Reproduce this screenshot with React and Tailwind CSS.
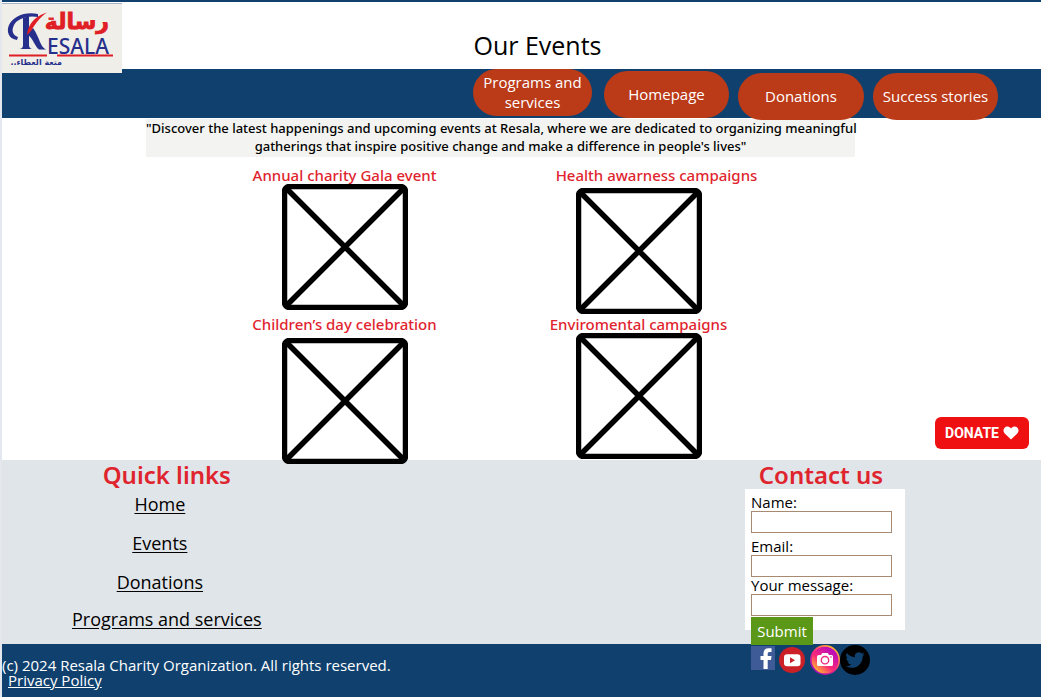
import React from "react";

const navItems = [
  { label: "Programs and services", cls: "mr-3 w-[119px]" },
  { label: "Homepage", cls: "mr-[9px] mt-0.5 w-[125px]" },
  { label: "Donations", cls: "mr-[9px] mt-1 w-[126px]" },
  { label: "Success stories", cls: "mt-1 w-[125px]" },
];

function Logo() {
  return (
    <svg viewBox="0 0 120 70" className="block h-[70px] w-[120px]" role="img" aria-label="Resala">
      <rect width="120" height="70" fill="#f0eee8" />
      <path d="M0 .5H120" stroke="#a9b0cc" strokeWidth="1" />
      <path d="M36 11C24 8 11 13 7 22C4 29 7 36 15 37L16 34C11 32 9 28 12 22C15 16 25 12 36 14Z" fill="#272f8c" />
      <path d="M21 15L27 13V42Q27 45 30 46H17Q21 46 21 42Z" fill="#272f8c" />
      <path d="M26 30L31 25C34 29 36 34 38 39C40 43 41 45 44 46.500H37C33 44 31 35 26 32Z" fill="#272f8c" />
      <path d="M25 32C26 21 33 13 45 9.500C38 14 34 20 29 28Z" fill="#e01e26" />
      <text x="107" y="26" textAnchor="end" fontFamily="DejaVu Sans, sans-serif" fontWeight="700" fontSize="22" fill="#e01e26" stroke="#e01e26" strokeWidth=".8">رسالة</text>
      <text x="45" y="51" fontFamily="Noto Sans, sans-serif" fontWeight="500" fontSize="21" fill="#272f8c">ESALA</text>
      <path d="M7 52.500H45M55 52.500H111" stroke="#e01e26" strokeWidth="2" />
      <text x="60" y="62" direction="rtl" fontFamily="DejaVu Sans, sans-serif" fontWeight="700" fontSize="8" fill="#272f8c">متعة العطاء..</text>
    </svg>
  );
}

function Placeholder() {
  return (
    <svg viewBox="0 0 126 126" className="relative block size-[126px] shrink-0" fill="none" stroke="#000" aria-hidden="true">
      <rect x="2.5" y="2.5" width="121" height="121" rx="5" strokeWidth="5.5" fill="#fff" />
      <path d="M4 4L122 122M122 4L4 122" strokeWidth="5.5" />
    </svg>
  );
}

function EventTitle({ children, className = "" }) {
  return (
    <h2 className={`whitespace-nowrap font-['Noto_Sans',sans-serif] text-[15px] leading-[14px] font-medium text-[#df242e] ${className}`}>{children}</h2>
  );
}

function Field({ id, label, type = "text", className = "" }) {
  return (
    <div className={className}>
      <label htmlFor={id} className="block pb-0.5 text-[15px] leading-[14px]">{label}</label>
      <input id={id} type={type} className="block h-[22px] w-[141px] border border-[#a88972] bg-white px-1 text-sm" />
    </div>
  );
}

function Socials() {
  return (
    <div className="flex items-center pl-1.5">
      <a href="#facebook" aria-label="Facebook" className="mr-1 -mt-1">
        <svg viewBox="0 0 24 24" className="block size-6">
          <rect width="24" height="24" fill="#3e5b98" />
          <path d="M12.500 23V14H9.500V10H12.500V7.500C12.500 4 14.500 2.300 17.500 2.300H20.500V6H18.500C17 6 16.700 6.700 16.700 8V10H20.500L20 14H16.700V23Z" fill="#fff" />
        </svg>
      </a>
      <a href="#youtube" aria-label="YouTube" className="mr-[5px]">
        <svg viewBox="0 0 26 26" className="block size-[26px]">
          <circle cx="13" cy="13" r="13" fill="#cb2027" />
          <rect x="5" y="7.3" width="16.5" height="12" rx="3" fill="#fff" />
          <path d="M11 10.200L16 13.200L11 16.200Z" fill="#cb2027" />
        </svg>
      </a>
      <a href="#instagram" aria-label="Instagram">
        <svg viewBox="0 0 30 30" className="block size-[30px]">
          <defs>
            <linearGradient id="ig" x1="0.15" y1="0.9" x2="0.8" y2="0.1">
              <stop offset="0" stopColor="#ffb92e" />
              <stop offset=".4" stopColor="#fb2a76" />
              <stop offset="1" stopColor="#b50ac0" />
            </linearGradient>
            <linearGradient id="ring" x1="0.15" y1="0.9" x2="0.8" y2="0.1">
              <stop offset="0" stopColor="#9d0bc4" />
              <stop offset=".5" stopColor="#f72b7c" />
              <stop offset="1" stopColor="#ffb52e" />
            </linearGradient>
          </defs>
          <circle cx="15" cy="15" r="15" fill="url(#ring)" />
          <circle cx="15" cy="15" r="13.3" fill="url(#ig)" />
          <path d="M9 10H11L12.200 8H17.800L19 10H21.500Q23 10 23 11.500V19.500Q23 21 21.500 21H8.500Q7 21 7 19.500V11.500Q7 10 9 10Z" fill="#fff" />
          <circle cx="15" cy="15.2" r="3.7" fill="none" stroke="#ee2b80" strokeWidth="1.4" />
          <circle cx="21" cy="12" r=".8" fill="#ee2b80" />
        </svg>
      </a>
      <a href="#twitter" aria-label="Twitter">
        <svg viewBox="0 0 30 30" className="block size-[30px]">
          <circle cx="15" cy="15" r="15" fill="#000" />
          <g transform="translate(5.500 5.500) scale(.8)">
            <path d="M23.9 4.6c-.9.4-1.8.7-2.8.8 1-.6 1.800-1.600 2.200-2.700-1 .6-2 1-3.100 1.200a4.900 4.900 0 0 0-8.400 4.500C7.700 8.200 4.100 6.300 1.700 3.200a4.900 4.900 0 0 0 1.500 6.600c-.8 0-1.600-.2-2.200-.6v.1c0 2.400 1.700 4.400 3.900 4.800a5 5 0 0 1-2.200.1 4.900 4.900 0 0 0 4.600 3.400A9.900 9.900 0 0 1 0 19.500a14 14 0 0 0 7.500 2.200c9.100 0 14-7.500 14-14v-.6c1-.7 1.800-1.600 2.400-2.500z" fill="#10416e" />
          </g>
        </svg>
      </a>
    </div>
  );
}

export default function App() {
  return (
    <div className="flex min-h-screen flex-col border-l-2 border-[#e4e7ed] bg-white font-['Open_Sans',sans-serif] text-black">
      <header className="relative">
        <div className="h-[69px] border-t-2 border-[#10416e] pt-[27px]">
          <h1 className="pl-8 text-center text-[25px] leading-8">Our Events</h1>
        </div>
        <a href="#home" className="absolute left-0 top-[3px]"><Logo /></a>
        <nav className="flex h-[49px] items-start justify-end bg-[#10416e] pr-[43px]">
          {navItems.map((n) => (
            <button key={n.label} type="button" className={`relative z-10 h-[47px] shrink-0 rounded-full bg-[#bb3a18] pb-0.5 text-[15px] leading-5 text-white ${n.cls}`}>
              {n.label}
            </button>
          ))}
        </nav>
      </header>

      <main className="relative grow pr-[42px]">
        <p className="mx-auto mt-px h-[38px] w-[709px] whitespace-nowrap bg-[#f3f4f1] text-center font-['Noto_Sans',sans-serif] text-[13px] leading-[18px] font-medium">
          "Discover the latest happenings and upcoming events at Resala, where we are dedicated to organizing meaningful
          <br />
          gatherings that inspire positive change and make a difference in people's lives"
        </p>
        <div className="-mb-1 flex justify-center pr-[18px] pt-[11px]">
          <section className="flex w-[294px] flex-col items-center">
            <EventTitle className="mb-0.5">Annual charity Gala event</EventTitle>
            <Placeholder />
            <EventTitle className="mb-[7px] mt-[7px]">Children’s day celebration</EventTitle>
            <Placeholder />
          </section>
          <section className="flex w-[294px] flex-col items-center">
            <EventTitle className="mb-1.5 pl-9">Health awarness campaigns</EventTitle>
            <Placeholder />
            <EventTitle className="mb-0.5 mt-[3px]">Enviromental campaigns</EventTitle>
            <Placeholder />
          </section>
        </div>
        <button type="button" className="absolute bottom-[11px] right-3 flex h-8 w-[94px] items-center justify-center gap-1 rounded-md bg-[#ef1112] text-white">
          <span className="font-['Roboto',sans-serif] text-sm font-bold">DONATE</span>
          <svg viewBox="0 0 16 14" className="h-3.5 w-4" fill="currentColor" aria-hidden="true">
            <path d="M8 13.500L1.700 7.500C-2 3.500 3.500-2.500 8 2.500C12.500-2.500 18 3.500 14.300 7.500Z" />
          </svg>
        </button>
      </main>

      <footer>
        <div className="flex h-[184px] justify-between bg-[#e0e5e9] pl-[70px] pr-[136px]">
          <section className="flex flex-col items-center">
            <h2 className="font-['Noto_Sans',sans-serif] text-2xl leading-[30px] font-semibold text-[#df242e]">Quick links</h2>
            <ul className="flex flex-col items-center gap-[11px] text-lg leading-7 underline underline-offset-2">
              <li className="pr-3.5"><a href="#home">Home</a></li>
              <li className="pr-3.5"><a href="#events">Events</a></li>
              <li className="pr-3.5"><a href="#donations">Donations</a></li>
              <li className="-mt-0.5"><a href="#programs">Programs and services</a></li>
            </ul>
          </section>
          <section className="w-40">
            <h2 className="pr-2 text-center font-['Noto_Sans',sans-serif] text-2xl leading-[29px] font-semibold text-[#df242e]">Contact us</h2>
            <form className="h-[141px] bg-white pl-1.5 pt-1.5">
              <Field id="name" label="Name:" />
              <Field id="email" label="Email:" type="email" className="mt-1.5" />
              <Field id="message" label="Your message:" className="mt-px" />
              <button type="button" className="relative mt-px block h-7 w-[62px] bg-[#5c9818] text-[15px] text-white">Submit</button>
            </form>
          </section>
        </div>
        <div className="flex h-[53px] items-start justify-between bg-[#10416e] pr-[136px] text-[15px] leading-[15px] text-white">
          <div className="pt-3.5">
            <p>(c) 2024 Resala Charity Organization. All rights reserved.</p>
            <a href="#privacy" className="ml-1.5 underline">Privacy Policy</a>
          </div>
          <div className="w-40 pt-px"><Socials /></div>
        </div>
      </footer>
    </div>
  );
}
